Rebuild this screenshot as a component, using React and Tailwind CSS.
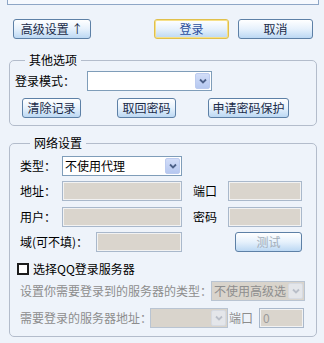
import React from "react";

const font = { fontFamily: '"Noto Sans CJK SC", "Liberation Sans", sans-serif' };

function Btn({ children, className = "", disabled = false, focused = false }) {
  return (
    <button
      className={`h-[20px] rounded-[3px] border bg-linear-to-b from-[#ffffff] via-[#e6f1fc] to-[#bcd8f3] text-[12px] leading-none flex items-center justify-center ${
        focused ? "border-[#e0c04c] shadow-[inset_0_0_0_1px_#f6e08a]" : "border-[#5d80a6]"
      } ${disabled ? "text-[#a2adb8]" : focused ? "text-[#2c4f9c]" : "text-[#1b2b48]"} ${className}`}
    >
      {children}
    </button>
  );
}

function Chevron({ disabled }) {
  return (
    <div
      className={`w-[15px] h-[16px] mr-[1px] shrink-0 rounded-[2px] flex items-center justify-center border ${
        disabled ? "bg-[#e4e6ea] border-[#d6dae2]" : "bg-linear-to-b from-[#d2ddf8] to-[#b6c8f0] border-[#bccbef]"
      }`}
    >
      <svg width="8" height="6" viewBox="0 0 8 6">
        <path d="M1 1.5 L4 4.5 L7 1.5" fill="none" stroke={disabled ? "#b9bec8" : "#4d6189"} strokeWidth="1.8" />
      </svg>
    </div>
  );
}

function Select({ value = "", disabled = false, className = "" }) {
  return (
    <div
      className={`h-[20px] border flex items-center justify-between ${
        disabled ? "bg-[#d9d4cc] border-[#b9c4d2] text-[#8e8e8e]" : "bg-white border-[#7f9db9] text-black"
      } ${className}`}
    >
      <span className="pl-[2px] text-[12px] leading-[16px] whitespace-nowrap">{value}</span>
      <Chevron disabled={disabled} />
    </div>
  );
}

function Field({ className = "", value = "" }) {
  return (
    <div
      className={`h-[20px] border border-[#a9b8cb] shadow-[inset_0_0_0_1px_#f2f2f2] bg-[#dad5cd] text-[#9a9a9a] text-[12px] leading-none flex items-center pl-[3px] ${className}`}
    >
      {value}
    </div>
  );
}

export default function App() {
  return (
    <div className="w-[324px] h-[343px] bg-[#eef3fa] overflow-hidden text-[12px] text-black" style={font}>
      {/* top panel edge */}
      <div className="ml-[7px] w-[312px] h-[5px] border-x border-b border-[#8ea6c6] bg-[#f6f9fe]" />

      {/* main buttons */}
      <div className="flex mt-[14px]">
        <Btn className="ml-[13px] w-[78px]">高级设置 ↑</Btn>
        <Btn className="ml-[63px] w-[75px]" focused>登录</Btn>
        <Btn className="ml-[9px] w-[75px]">取消</Btn>
      </div>

      {/* 其他选项 */}
      <fieldset className="ml-[9px] mt-[13px] w-[308px] border border-[#b3bccb] rounded-[5px] pl-[5px] pb-[7px]">
        <legend className="ml-[10px] px-[4px] text-[12px] leading-[16px]">其他选项</legend>
        <div className="flex items-center mt-[3px]">
          <span className="w-[72px] leading-none">登录模式：</span>
          <Select className="w-[125px]" />
        </div>
        <div className="flex mt-[7px]">
          <Btn className="ml-[7px] w-[59px]">清除记录</Btn>
          <Btn className="ml-[36px] w-[59px]">取回密码</Btn>
          <Btn className="ml-[32px] w-[81px]">申请密码保护</Btn>
        </div>
      </fieldset>

      {/* 网络设置 */}
      <fieldset className="ml-[9px] mt-[9px] w-[308px] h-[202px] border border-[#b3bccb] rounded-[5px] pl-[10px]">
        <legend className="ml-[10px] px-[4px] text-[12px] leading-[16px]">网络设置</legend>
        <div className="flex items-center mt-[5px]">
          <span className="w-[42px] leading-none">类型：</span>
          <Select className="w-[120px]" value="不使用代理" />
        </div>
        <div className="flex items-center mt-[5px]">
          <span className="w-[42px] leading-none">地址：</span>
          <Field className="w-[120px]" />
          <span className="ml-[11px] w-[35px] leading-none">端口</span>
          <Field className="w-[74px]" />
        </div>
        <div className="flex items-center mt-[6px]">
          <span className="w-[42px] leading-none">用户：</span>
          <Field className="w-[120px]" />
          <span className="ml-[11px] w-[35px] leading-none">密码</span>
          <Field className="w-[74px]" />
        </div>
        <div className="flex items-center mt-[5px]">
          <span className="w-[76px] leading-none">域(可不填)：</span>
          <Field className="w-[86px]" />
          <Btn className="ml-[53px] w-[67px]" disabled>测试</Btn>
        </div>
        <div className="flex items-center mt-[11px] -ml-[3px]">
          <div className="w-[12px] h-[12px] border-2 border-[#1c1c1c] bg-white" />
          <span className="ml-[4px] leading-none">选择QQ登录服务器</span>
        </div>
        <div className="flex items-center mt-[6px] text-[#8d8d8d]">
          <span className="w-[191px] leading-none whitespace-nowrap">设置你需要登录到的服务器的类型：</span>
          <Select className="w-[94px]" value="不使用高级选" disabled />
        </div>
        <div className="flex items-center mt-[7px] text-[#8d8d8d]">
          <span className="w-[130px] leading-none whitespace-nowrap">需要登录的服务器地址：</span>
          <Select className="w-[78px]" disabled />
          <span className="ml-[1px] w-[30px] leading-none">端口</span>
          <Field className="w-[45px]" value="0" />
        </div>
      </fieldset>
    </div>
  );
}
